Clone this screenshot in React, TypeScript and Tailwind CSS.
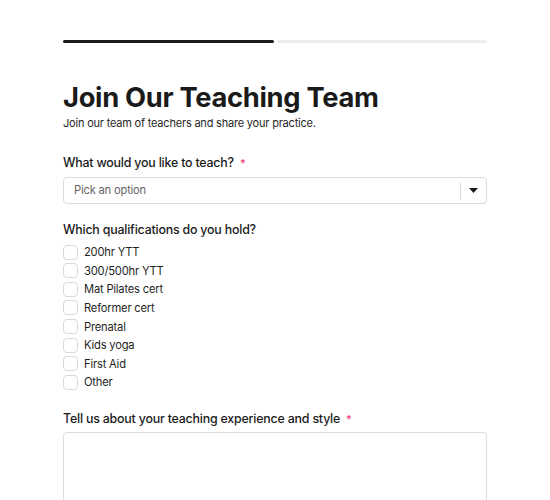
import React from "react";

const quals = [
  "200hr YTT",
  "300/500hr YTT",
  "Mat Pilates cert",
  "Reformer cert",
  "Prenatal",
  "Kids yoga",
  "First Aid",
  "Other",
];

function Required() {
  return <span className="ml-[6px] text-[11px] text-[#e6397a]">*</span>;
}

export default function App() {
  return (
    <div
      className="min-h-screen bg-white text-[#1a1a1a]"
      style={{ fontFamily: "Inter, 'Noto Sans', sans-serif" }}
    >
      <div className="mx-auto w-[424px] pt-[40px]">
        {/* step progress */}
        <div className="flex gap-[3px]">
          <div className="h-[3px] flex-1 rounded-full bg-[#1a1a1a]" />
          <div className="h-[3px] flex-1 rounded-full bg-[#ececec]" />
        </div>

        <h1 className="mt-[38px] text-[27.3px] font-bold leading-[34px] tracking-[-0.3px]">
          Join Our Teaching Team
        </h1>
        <p className="text-[11px] leading-[16px] tracking-[-0.2px] text-[#1f1f1f]">
          Join our team of teachers and share your practice.
        </p>

        <div className="mt-[24px]">
          <label className="block text-[12.4px] font-medium leading-[16px] tracking-[-0.2px]">
            What would you like to teach?
            <Required />
          </label>
          <div className="mt-[6px] flex h-[27px] items-center rounded-[4px] border border-[#dcdcdc] bg-white">
            <span className="flex-1 pl-[10px] text-[11.2px] tracking-[-0.2px] text-[#666]">
              Pick an option
            </span>
            <div className="h-[18px] w-px bg-[#dcdcdc]" />
            <div className="flex w-[25px] justify-center">
              <svg width="9" height="5" viewBox="0 0 9 5">
                <path d="M0 0h9L4.5 5z" fill="#1a1a1a" />
              </svg>
            </div>
          </div>
        </div>

        <div className="mt-[18px]">
          <div className="text-[12.4px] font-medium leading-[16px] tracking-[-0.2px]">
            Which qualifications do you hold?
          </div>
          <div className="mt-[5px] flex flex-col">
            {quals.map((q) => (
              <label key={q} className="flex h-[18.57px] items-center gap-[6px]">
                <span className="h-[15px] w-[15px] rounded-[4px] border border-[#d9d9d9] bg-white" />
                <span className="text-[11.2px] leading-[14px] tracking-[-0.2px] text-[#1f1f1f]">
                  {q}
                </span>
              </label>
            ))}
          </div>
        </div>

        <div className="mt-[19px]">
          <label className="block text-[12.4px] font-medium leading-[16px] tracking-[-0.2px]">
            Tell us about your teaching experience and style
            <Required />
          </label>
          <div className="mt-[5px] h-[100px] rounded-[4px] border border-[#dcdcdc] bg-white" />
        </div>
      </div>
    </div>
  );
}
